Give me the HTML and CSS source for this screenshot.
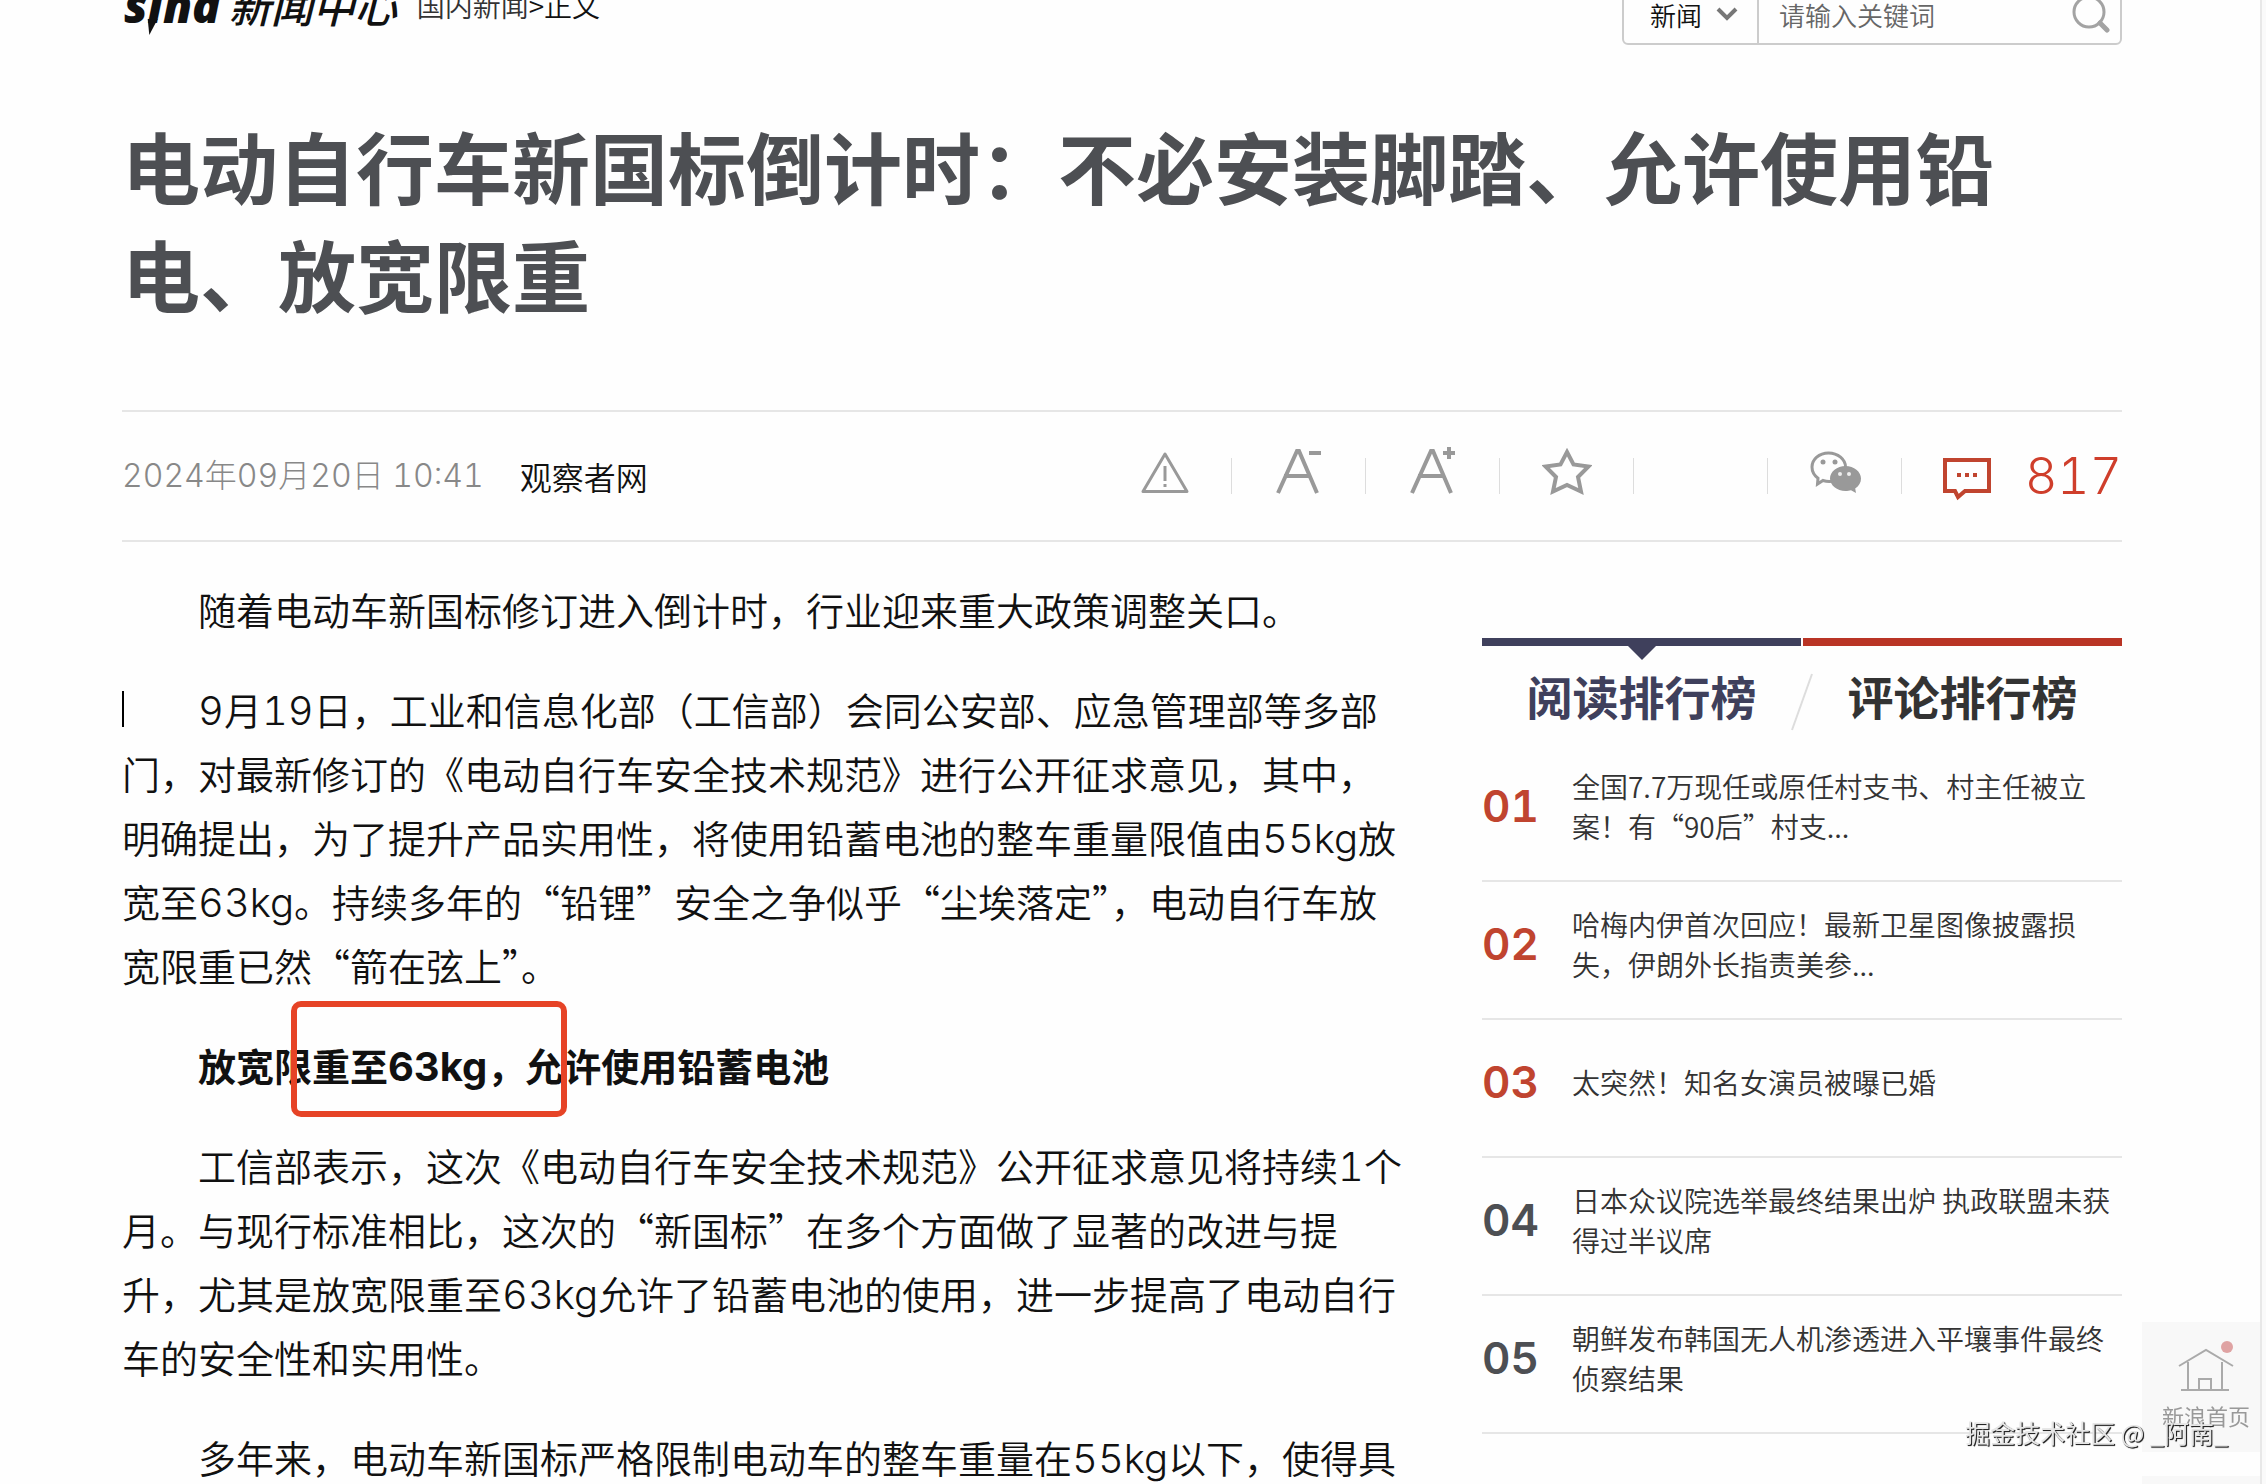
FILE: index.html
```html
<!DOCTYPE html>
<html lang="zh-CN">
<head>
<meta charset="utf-8">
<meta name="viewport" content="width=device-width, initial-scale=1">
<title>电动自行车新国标倒计时：不必安装脚踏、允许使用铅电、放宽限重</title>
<link rel="stylesheet" href="styles.css">
</head>
<body>
<div class="page">
  <header class="topbar">
    <a class="logo" href="#"><span class="logo-latin">sina</span><span class="logo-cn">新闻中心</span></a>
    <nav class="crumbs"><a href="#">国内新闻</a>&gt;正文</nav>
    <form class="search">
      <span class="scope">
        <select aria-label="搜索范围"><option>新闻</option></select>
        <svg class="chevron" width="22" height="14" viewBox="0 0 22 14" fill="none" stroke="#777" stroke-width="4" aria-hidden="true"><path d="M2 2l9 9 9-9"/></svg>
      </span>
      <input type="text" placeholder="请输入关键词" aria-label="关键词">
      <button class="search-btn" type="button" aria-label="搜索">
        <svg width="38" height="38" viewBox="0 0 38 38" fill="none" stroke="#a3a3a3" aria-hidden="true"><circle cx="17" cy="17" r="15" stroke-width="3"/><path d="M28 28l7 7" stroke-width="5" stroke-linecap="round"/></svg>
      </button>
    </form>
  </header>

  <h1 class="title">电动自行车新国标倒计时：不必安装脚踏、允许使用铅电、放宽限重</h1>

  <div class="meta">
    <div class="info">
      <time class="date">2024<span class="cn">年</span>09<span class="cn">月</span>20<span class="cn">日</span> 10:41</time>
      <a class="source" href="#">观察者网</a>
    </div>
    <div class="tools">
      <button class="tool" type="button" aria-label="举报">
        <svg width="50" height="50" viewBox="0 0 50 50" fill="none" stroke="#999" stroke-width="3" aria-hidden="true"><path d="M25 7L47 44.500H3z" stroke-linejoin="round"/><path d="M25 19v15M25 37v3"/></svg>
      </button>
      <button class="tool" type="button" aria-label="缩小字号">
        <svg width="50" height="50" viewBox="0 0 50 50" fill="none" stroke="#999" stroke-width="4" aria-hidden="true"><path d="M4 46L23 4h2l18 42M10 29h27"/><path d="M35 6h12"/></svg>
      </button>
      <button class="tool" type="button" aria-label="放大字号">
        <svg width="50" height="50" viewBox="0 0 50 50" fill="none" stroke="#999" stroke-width="4" aria-hidden="true"><path d="M4 46L23 4h2l18 42M10 29h27"/><path d="M35 6h12M41 0v12"/></svg>
      </button>
      <button class="tool" type="button" aria-label="收藏">
        <svg width="50" height="50" viewBox="0 0 50 50" fill="none" stroke="#999" stroke-width="4" aria-hidden="true"><path d="M25 5l6.500 12.500 15 2-10.500 10.500 3 14.500L25 38l-14 6.500 3-14.500L3.500 19.500l15-2z"/></svg>
      </button>
      <span class="tool"></span>
      <button class="tool" type="button" aria-label="分享到微信">
        <svg width="54" height="50" viewBox="0 0 54 50" aria-hidden="true"><path d="M20.500 6C11 6 4 12.500 4 20c0 4.500 2.300 8.500 6 11.200L9.500 37l5.500-3.500c8 2.500 22.500 0 22.500-13.500C37.500 12.500 30 6 20.500 6z" fill="none" stroke="#999" stroke-width="3"/><circle cx="15" cy="15" r="2.500" fill="#999"/><circle cx="27" cy="15" r="2.500" fill="#999"/><path d="M37.500 19C29 19 22 24.700 22 31.500S29 44 37.500 44c2 0 4-.300 5.500-.800L48 46l-.800-4.500C51 39 53 35.500 53 31.500 53 24.700 46 19 37.500 19z" fill="#999"/><circle cx="32" cy="27" r="2" fill="#eee"/><circle cx="41" cy="27" r="2" fill="#eee"/></svg>
      </button>
      <a class="comments" href="#">
        <svg width="50" height="50" viewBox="0 0 50 50" fill="none" stroke="#c0442f" stroke-width="4" aria-hidden="true"><path d="M3 9h44v31H23l-7 6-3-6H3z"/><path d="M15 24h4M23 24h4M31 24h4"/></svg>
        <span>817</span>
      </a>
    </div>
  </div>

  <div class="columns">
    <article class="article">
      <p>随着电动车新国标修订进入倒计时，行业迎来重大政策调整关口。</p>
      <p class="with-caret"><span class="num">9</span>月<span class="num">19</span>日，工业和信息化部（工信部）会同公安部、应急管理部等多部门，对最新修订的《电动自行车安全技术规范》进行公开征求意见，其中，明确提出，为了提升产品实用性，将使用铅蓄电池的整车重量限值由<span class="num">55kg</span>放宽至<span class="num">63kg</span>。持续多年的“铅锂”安全之争似乎“尘埃落定”，电动自行车放宽限重已然“箭在弦上”。</p>
      <p class="marked"><strong>放宽限重至<span class="num">63kg</span>，允许使用铅蓄电池</strong></p>
      <p>工信部表示，这次《电动自行车安全技术规范》公开征求意见将持续<span class="num">1</span>个月。与现行标准相比，这次的“新国标”在多个方面做了显著的改进与提升，尤其是放宽限重至<span class="num">63kg</span>允许了铅蓄电池的使用，进一步提高了电动自行车的安全性和实用性。</p>
      <p>多年来，电动车新国标严格限制电动车的整车重量在<span class="num">55kg</span>以下，使得具</p>
    </article>

    <aside class="ranking">
      <div class="tabs">
        <button class="tab active" type="button">阅读排行榜</button>
        <button class="tab" type="button">评论排行榜</button>
        <svg class="slash" width="24" height="60" viewBox="0 0 24 60" stroke="#ddd" stroke-width="2" aria-hidden="true"><path d="M22 2L2 58"/></svg>
      </div>
      <ol class="list">
        <li><span class="rank hot">01</span><a href="#">全国7.7万现任或原任村支书、村主任被立案！有“90后”村支...</a></li>
        <li><span class="rank hot">02</span><a href="#">哈梅内伊首次回应！最新卫星图像披露损失，伊朗外长指责美参...</a></li>
        <li><span class="rank hot">03</span><a href="#">太突然！知名女演员被曝已婚</a></li>
        <li><span class="rank">04</span><a href="#">日本众议院选举最终结果出炉 执政联盟未获得过半议席</a></li>
        <li><span class="rank">05</span><a href="#">朝鲜发布韩国无人机渗透进入平壤事件最终侦察结果</a></li>
      </ol>
    </aside>
  </div>
</div>

<div class="float-nav">
  <a class="float-item" href="#">
    <svg width="56" height="52" viewBox="0 0 56 52" fill="none" stroke="#aaa" stroke-width="2" aria-hidden="true"><path d="M1 26L28 10l27 16M10 22v28M44 22v28M3 50h48M21 50V39h12v11"/><circle cx="49" cy="7" r="6" fill="#dfa3a3" stroke="none"/></svg>
    <span>新浪首页</span>
  </a>
  <div class="float-item"></div>
</div>
<div class="gutter"></div>
<div class="watermark">掘金技术社区 @ _阿南_</div>
</body>
</html>
```
FILE: styles.css
```css
*,
*::before,
*::after {
  box-sizing: border-box;
}

body {
  margin: 0;
  background: #fefefe;
  color: #111;
  font-family: "Noto Sans CJK SC", sans-serif;
}

a {
  color: inherit;
  text-decoration: none;
}

button,
input,
select {
  margin: 0;
  padding: 0;
  border: 0;
  background: none;
  color: inherit;
  font: inherit;
}

.num {
  font-family: Inter, sans-serif;
  font-size: 40px;
  font-variant-numeric: tabular-nums;
  line-height: 1;
}

.page {
  height: 100vh;
  padding: 0 144px 0 122px;
  overflow: hidden;
}

/* Header, scrolled partly out of view */
.topbar {
  display: flex;
  align-items: center;
  height: 62px;
  margin-top: -17px;
}

.logo {
  display: flex;
  align-items: center;
  gap: 8px;
  margin-top: -18px;
  color: #111;
  line-height: 40px;
}

.logo-latin {
  position: relative;
  padding-left: 2px;
  font: italic 800 47px/40px "Open Sans", sans-serif;
}

/* Tail of the logo's second letter */
.logo-latin::after {
  content: "";
  position: absolute;
  top: 34px;
  left: 24px;
  border: 5px solid transparent;
  border-top: 16px solid #111;
  border-bottom: 0;
  transform: skewX(-12deg);
}

.logo-cn {
  font-size: 42px;
  font-style: italic;
  font-weight: 500;
}

.crumbs {
  margin: -18px 0 0 20px;
  color: #111;
  font-size: 28px;
  font-weight: 350;
}

.crumbs a {
  color: #333;
}

.search {
  display: flex;
  align-items: center;
  width: 500px;
  height: 62px;
  margin-left: auto;
  border: 2px solid #ccc;
  border-radius: 6px;
  font-size: 26px;
  font-weight: 350;
}

.scope {
  display: flex;
  align-items: center;
  gap: 14px;
  width: 135px;
  height: 100%;
  padding-left: 26px;
  border-right: 2px solid #ccc;
}

.scope select {
  width: 52px;
  appearance: none;
  color: #111;
}

.search input {
  flex: 1;
  min-width: 0;
  padding-left: 20px;
  outline: 0;
}

.search input::placeholder {
  color: #666;
}

.search-btn {
  display: flex;
  margin-right: 10px;
}

.title {
  margin: 66px 0 83px;
  color: #4d4f53;
  font-size: 78px;
  font-weight: 700;
  line-height: 108px;
}

/* Publication info and tools */
.meta {
  display: flex;
  align-items: center;
  justify-content: space-between;
  height: 132px;
  border-top: 2px solid #e6e6e6;
  border-bottom: 2px solid #e6e6e6;
}

.info {
  display: flex;
  align-items: center;
  gap: 36px;
  font-size: 32px;
  font-weight: 300;
  line-height: 60px;
}

.date {
  color: #888;
  font-family: Inter, sans-serif;
  font-variant-numeric: tabular-nums;
}

.cn {
  font-family: "Noto Sans CJK SC", sans-serif;
  line-height: 1;
}

.source {
  color: #111;
  font-weight: 350;
}

.tools {
  display: flex;
  align-items: center;
}

.tool {
  display: flex;
  align-items: center;
  justify-content: center;
  width: 134px;
  height: 36px;
  border-right: 1px solid #ddd;
}

.tool svg {
  flex: none;
  margin-top: -8px;
}

.comments {
  display: flex;
  align-items: center;
  justify-content: space-between;
  width: 220px;
  padding-left: 40px;
  color: #cf3e2b;
  font-family: Inter, sans-serif;
  font-size: 50px;
  font-variant-numeric: tabular-nums;
  font-weight: 300;
  line-height: 60px;
}

/* Article and ranking */
.columns {
  display: flex;
  align-items: flex-start;
  gap: 76px;
}

.article {
  flex: 1;
  padding-top: 35px;
  font-size: 38px;
  font-weight: 350;
  line-height: 64px;
}

.article p {
  position: relative;
  margin: 0 0 36px;
  text-indent: 2em;
}

.article strong {
  font-weight: 700;
}

.with-caret::before {
  content: "";
  position: absolute;
  top: 14px;
  left: 0;
  width: 2px;
  height: 36px;
  background: #000;
}

.marked::after {
  content: "";
  position: absolute;
  top: -32px;
  left: 169px;
  width: 276px;
  height: 116px;
  border: 6px solid #e64326;
  border-radius: 10px;
}

.ranking {
  width: 32%;
  padding-top: 96px;
}

.tabs {
  position: relative;
  display: flex;
  gap: 2px;
}

.tab {
  position: relative;
  flex: 1;
  height: 106px;
  border-top: 8px solid #b93425;
  color: #333;
  font-size: 46px;
  font-weight: 700;
  line-height: 96px;
}

.tab.active {
  border-color: #3f405c;
  color: #3f405c;
}

.tab.active::after {
  content: "";
  position: absolute;
  top: 0;
  left: 50%;
  border: 14px solid transparent;
  border-top-color: #3f405c;
  border-bottom: 0;
  translate: -50%;
}

.slash {
  position: absolute;
  top: 34px;
  left: 50%;
  translate: -50%;
}

.list {
  margin: 0;
  padding: 0;
  list-style: none;
}

.list li {
  display: flex;
  align-items: center;
  height: 138px;
  padding: 21px 0 33px;
  border-bottom: 2px solid #e6e6e6;
  color: #333;
  font-size: 28px;
  font-weight: 350;
  line-height: 40px;
}

.rank {
  flex: none;
  width: 90px;
  color: #4d4f53;
  font-family: Inter, sans-serif;
  font-size: 44px;
  font-variant-numeric: tabular-nums;
  font-weight: 600;
}

.rank.hot {
  color: #c0442f;
}

/* Shortcut panel on the right edge */
.float-nav {
  position: fixed;
  right: 6px;
  bottom: -98px;
  display: grid;
  gap: 24px;
}

.float-item {
  display: flex;
  flex-direction: column;
  align-items: center;
  width: 118px;
  height: 130px;
  padding-top: 18px;
  padding-left: 10px;
  background: #f8f8f8;
  color: #999;
  font-size: 22px;
  line-height: 46px;
}

.float-item svg {
  flex: none;
}

.float-item + .float-item {
  height: 106px;
}

.gutter {
  position: fixed;
  top: 0;
  right: 0;
  bottom: 0;
  width: 6px;
  border-left: 2px solid #e8e8e8;
  background: #fafafa;
}

.watermark {
  position: fixed;
  right: 38px;
  bottom: 34px;
  color: #e6e6e6;
  font-size: 25px;
  line-height: 36px;
  text-shadow: 1px 1px 1px #222, 1px 1px 0 #444;
}
```
